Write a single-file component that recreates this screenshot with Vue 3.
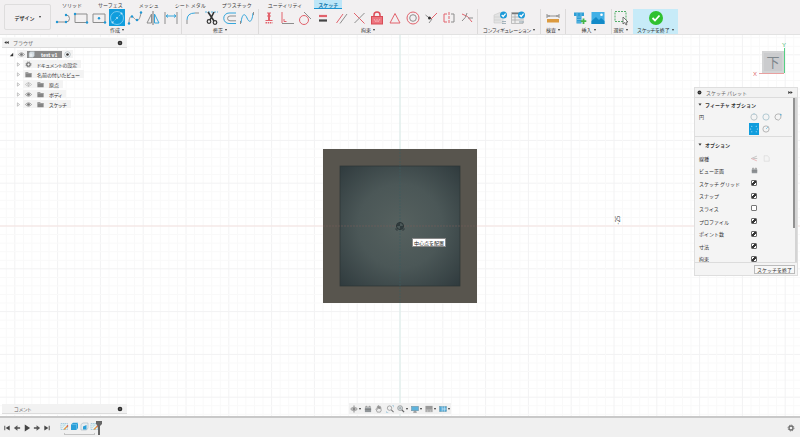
<script setup>
import { h, ref } from 'vue'

const G = 'fill="none" stroke="#8d8d8d" stroke-width="1"'
const B = 'fill="none" stroke="#35a6dc" stroke-width="1"'
const R = 'fill="none" stroke="#e2626c" stroke-width="1"'
const dot = (x, y, c = '#1f97d4') => `<circle cx="${x}" cy="${y}" r="1.2" fill="${c}"/>`

const glyphs = {
  line: `<path ${G} d="M3 13H12a3.500 3.500 0 0 0 0-7"/>${dot(3, 13)}${dot(12, 13)}${dot(12, 6)}`,
  rect: `<path ${G} d="M3 5H15V13.500H3Z"/>${dot(3, 5)}${dot(15, 13.5)}`,
  centerRect: `<path ${G} d="M3 5H15V13.500H3Z"/>${dot(9, 9.2)}${dot(15, 13.5)}`,
  circle: `<circle cx="9" cy="9" r="6.500" fill="none" stroke="#8fd3f4" stroke-width=".8"/><path d="M4.500 13.500L13.500 4.500" stroke="#7ccbf1" stroke-width=".7" stroke-dasharray="2 1"/><g fill="#b9e5fa"><circle cx="9" cy="9" r=".9"/><circle cx="13.500" cy="4.500" r="1"/><circle cx="4.500" cy="13.500" r="1"/></g>`,
  spline: `<path ${G} d="M3 14.500C3 7 5.500 6 8 9S13 14 15 4"/>${dot(3, 14.5)}${dot(6, 7.5)}${dot(11, 11)}${dot(15, 3.5)}`,
  mirror: `<path ${G} d="M7.500 5L3 14H7.500Z"/><path ${B} d="M10.500 5L15 14H10.500Z"/><path d="M9 2V16" stroke="#777"/>`,
  dimension: `<path ${G} d="M3 3V15M15 3V15"/><path ${B} d="M4 7H14M6 5.500L4 7L6 8.500M12 5.500L14 7L12 8.500"/>`,
  fillet: `<path ${B} d="M3 11Q3 4 11 4"/><path ${G} d="M3 11V15M11 4H15"/>`,
  trim: `<path d="M3 3H16" stroke="#35a6dc" stroke-width=".8" stroke-dasharray="2 1"/><path d="M6 3L12 12M12 3L8 11" stroke="#333" stroke-width="1.600"/><circle cx="7" cy="12.500" r="1.800" fill="none" stroke="#333" stroke-width="1.200"/><circle cx="13" cy="13.500" r="1.800" fill="none" stroke="#333" stroke-width="1.200"/>`,
  offset: `<path ${B} d="M16 4H9a5 5 0 0 0 0 10.500H16"/><path ${G} d="M16 7H10a2.300 2.300 0 0 0 0 4.800H16"/>`,
  curve: `<path ${B} d="M3 14C4 4 7 4 9 9S14 14 15 4"/><path ${G} d="M2.500 15V12M15.500 3V6"/>`,
  fix: `<path d="M9 4V11" stroke="#e2626c" stroke-width="2"/><path d="M7 4H11M7 7H11" ${R}/><path d="M5.500 11.500H12.500" ${R}/><path d="M5.500 13.800H12.500" stroke="#e2626c" stroke-width="1.500" stroke-dasharray="1.500 .7"/>`,
  corner: `<path d="M4 3V14" ${R}/><path d="M4 14.500H16" ${G}/><path d="M6 10V12.500H8.500" ${R}/>`,
  tangent: `<circle cx="8" cy="11" r="4.500" ${R}/><path d="M8 3L15 10" ${G}/>`,
  equal: `<path d="M5 7H13" stroke="#e2626c" stroke-width="2.200"/><path d="M5 11.500H13" stroke="#444" stroke-width="2.200"/>`,
  parallel: `<path d="M4.500 14L11 5" ${R}/><path d="M8 14.500L15 5" ${G}/>`,
  perp: `<path d="M4 4L9.500 9.500L14.500 14.500" ${R}/><path d="M14.500 4L4.500 14" ${G}/>`,
  lock: `<path d="M6 8V6a3 3 0 0 1 6 0V8" fill="none" stroke="#de4c58" stroke-width="1.500"/><rect x="3.500" y="7.500" width="11" height="7.500" fill="#ed747e" stroke="#d84c57"/><path d="M6 10L8 13M9 10V13M12 10L10 13" stroke="#fff" stroke-width=".4"/>`,
  triangle: `<path d="M9 4.500L14 14H4Z" ${R}/>`,
  concentric: `<circle cx="9" cy="9" r="6" ${R}/><circle cx="9" cy="9" r="3.300" ${G}/>`,
  midpoint: `<path d="M9 10L15 4" ${R}/><path d="M7 14L10 10" ${G}/><path d="M3.500 6L8 9.500" ${G}/><circle cx="7.500" cy="9" r="1.500" fill="#333"/>`,
  symmetry: `<path d="M7 5H4V13H7" ${R}/><path d="M11 5H14V13H11" ${G}/><path d="M9 3V15" stroke="#e2626c" stroke-dasharray="3 1"/>`,
  curvature: `<path d="M4 5Q10 6 14 13" ${R}/><path d="M9 4Q8 9 4 12M10 9H15" ${G}/>`,
  config: `<path d="M3 6L9 3.500L12 5V14H3Z" fill="#e3e3e3" stroke="#c9c9c9" stroke-width=".6"/><path d="M3 8H10M3 11H10" stroke="#c9c9c9" stroke-width=".6"/><circle cx="12.500" cy="6" r="3.500" fill="#1d9ad8"/><path d="M10.700 6L12.200 7.500L14.600 4.700" fill="none" stroke="#fff" stroke-width="1.200"/><path d="M11 12.500H15M11 14.500H15" stroke="#8fa4b0" stroke-width=".8"/>`,
  table: `<path d="M2.500 3.500H14V14.500H2.500Z" fill="#ededed" stroke="#aaa" stroke-width=".7"/><path d="M3 4.500H13" stroke="#777" stroke-width="1.500"/><path d="M3 8H13M3 11H13M6 5V14" stroke="#aaa" stroke-width=".8"/><circle cx="12.500" cy="6" r="3.500" fill="#1d9ad8"/><path d="M10.700 6L12.200 7.500L14.600 4.700" fill="none" stroke="#fff" stroke-width="1.200"/><path d="M10 13H15" stroke="#8fa4b0"/>`,
  measure: `<path d="M3 5V9M15 5V9M3 7H15M5 6V8M13 6V8" stroke="#777" fill="none" stroke-width=".8"/><rect x="3" y="10" width="12" height="3.500" fill="#dc9a3f"/>`,
  insert: `<path d="M3 3.500H13V7H10.500V14.500H5.500V7H3Z" fill="#2f9fd6"/><path d="M5.500 8H10.500M5.500 10.500H10.500M5.500 13H10.500M6 3.500V7M10 3.500V7" stroke="#86caea" stroke-width=".7"/><path d="M12.500 9.500V15M9.700 12.200H15.300" stroke="#42b549" stroke-width="1.800"/>`,
  image: `<rect x="2.500" y="3" width="13" height="12" fill="#42b0e6"/><path d="M2.500 12L7 8L10 11L12 9L15.500 12V15H2.500Z" fill="#138ac8"/><circle cx="12.500" cy="5.800" r="1.300" fill="#fff"/>`,
  select: `<rect x="3" y="2.500" width="11" height="10" fill="none" stroke="#53ad69" stroke-dasharray="2 1"/><path d="M11 8L11 15L12.700 13.500L14 16L15 15.500L14 13L16 13Z" fill="#fff" stroke="#555" stroke-width=".8"/>`,
  done: `<circle cx="9" cy="9" r="7" fill="#2fc12f"/><path d="M5.500 9L8 11.500L12.500 6.500" fill="none" stroke="#fff" stroke-width="1.800"/>`,
  eye: `<path d="M1 9Q9 0 17 9Q9 18 1 9Z" fill="#eee" stroke="#777" stroke-width="1.500"/><circle cx="9" cy="9" r="3.500" fill="#777"/>`,
  eyeOff: `<path d="M1 9Q9 0 17 9Q9 18 1 9Z" fill="none" stroke="#aaa" stroke-width="1.500"/><circle cx="9" cy="9" r="2.500" fill="none" stroke="#aaa" stroke-width="1.300"/><path d="M9 3V15" stroke="#aaa"/>`,
  folder: `<path d="M1 3H8L9.500 5H17V16H1Z" fill="#858585"/><path d="M2 6.500H16" stroke="#c3c3c3"/>`,
  gear: `<circle cx="9" cy="9" r="4.500" fill="none" stroke="#6f6f6f" stroke-width="3"/><circle cx="9" cy="9" r="6.700" fill="none" stroke="#6f6f6f" stroke-width="2" stroke-dasharray="2.800 2.460"/>`,
  component: `<path d="M3 5L6 2H16V13L13 16H3Z" fill="#e9edf0" stroke="#bccbd4"/><path d="M3 5H13V16M13 5L16 2" fill="none" stroke="#9fb3bf"/>`,
  radio: `<circle cx="9" cy="9" r="7" fill="#fff" stroke="#8799a3" stroke-width="1.500"/><circle cx="9" cy="9" r="3.500" fill="#333"/>`,
  bullet: `<circle cx="9" cy="9" r="7" fill="#2d2d2d"/><path d="M6 9H12" stroke="#bbb" stroke-width="1.500"/>`,
  rewind: `<path d="M9 4V14L1 9ZM17 4V14L9 9Z" fill="#333"/>`,
  forward: `<path d="M1 4V14L9 9ZM9 4V14L17 9Z" fill="#333"/>`,
  closed: `<path d="M5 3L13 9L5 15Z" fill="none" stroke="#888" stroke-width="1.700"/>`,
  open: `<path d="M15 3V15H3Z" fill="#333"/>`,
  down: `<path d="M2 4H16L9 15Z" fill="#333"/>`,
  first: `<path d="M4 4V14" stroke="#444" stroke-width="2"/><path d="M15 3.500V14.500L6 9Z" fill="#444"/>`,
  prev: `<path d="M10 3V15L2 9Z" fill="#555"/><path d="M9 9H16" stroke="#555" stroke-width="3.500"/>`,
  play: `<path d="M4 1V17L16 9Z" fill="#444"/>`,
  next: `<path d="M8 3V15L16 9Z" fill="#555"/><path d="M2 9H9" stroke="#555" stroke-width="3.500"/>`,
  last: `<path d="M14 4V14" stroke="#444" stroke-width="2"/><path d="M3 3.500V14.500L12 9Z" fill="#444"/>`,
  sketch: `<path d="M2 3H15V15H2Z" fill="#e9f3f8" stroke="#86bad4" stroke-width="1.300" stroke-dasharray="3 1"/><path d="M4 12L10 5M4 6H11" stroke="#9cc" /><path d="M8 15L15 8" stroke="#e49a44" stroke-width="2.500"/><path d="M14 9L16 7" stroke="#cf5252" stroke-width="2.500"/>`,
  extrude: `<path d="M2 5L6 1.500H16V12L13 16H2Z" fill="#2a9fd9"/><path d="M2 5H13V16M13 5L16 2" fill="none" stroke="#8cd0ef"/>`,
  shell: `<path d="M2 5L6 2H16V12L13 16H2Z" fill="#e8eef1" stroke="#98abb5"/><path d="M6 15V9L13 6V15Z" fill="#2a9fd9"/>`,
  orbit: `<path d="M9 1V17M2 9H16" stroke="#888" stroke-width="2"/><ellipse cx="9" cy="9" rx="7" ry="4" fill="none" stroke="#999" stroke-width="1.500"/><circle cx="9" cy="9" r="3" fill="#888"/>`,
  look: `<rect x="2" y="6" width="14" height="10" fill="#909598"/><path d="M4 6V3H7V6M11 6V3H14V6M2 10H16" fill="none" stroke="#777" stroke-width="1.500"/>`,
  hand: `<path d="M5 16L2 9Q3 7 5 10V4Q6 2 7 4V8V2Q8 0 9 2V8V3Q10 1 11 3V9V5Q13 3 13 6L14 12L12 16Z" fill="#eee" stroke="#777" stroke-width="1.300"/>`,
  zoomWin: `<circle cx="8" cy="7" r="5" fill="none" stroke="#777" stroke-width="1.300"/><path d="M12 11L17 16" stroke="#777" stroke-width="2.500"/><path d="M1 14V17H5M14 1H17V5" fill="none" stroke="#6aaed0"/>`,
  zoom: `<circle cx="7" cy="7" r="5.500" fill="#d9e2e6" stroke="#777" stroke-width="1.300"/><path d="M11 11L16 16" stroke="#666" stroke-width="3"/><path d="M4 7H10M7 4V10" stroke="#777"/>`,
  display: `<rect x="1" y="3" width="16" height="10" fill="#5eb3dc" stroke="#6d8795"/><path d="M9 13V16M5 16H13" stroke="#777" stroke-width="2"/>`,
  grid: `<path d="M1 2H17V16H1Z" fill="#999"/><path d="M1 11H17M6 11V16M12 11V16M1 14H17" stroke="#ddd"/>`,
  views: `<rect x="1" y="3" width="16" height="12" fill="#51a9d7" stroke="#6e929f"/><path d="M7 3V15M12 3V15M7 9H17" stroke="#e8f5fb" stroke-width="1.300"/>`,
  pCircle: `<circle cx="9" cy="9" r="7" fill="none" stroke="#a9b7be" stroke-width="1.700"/><circle cx="9" cy="2" r="1.300" fill="#8fc8e2"/>`,
  pCircle2: `<circle cx="9" cy="9" r="7" fill="none" stroke="#9dbdc8" stroke-width="1.700"/>`,
  pTangent: `<path d="M4 4L9 2L16 3L15 12L10 16L4 14L2 9Z" fill="none" stroke="#999" stroke-width="1.500"/><circle cx="15" cy="4" r="1.800" fill="#58b5df"/>`,
  pTangent3: `<circle cx="9" cy="9" r="7" fill="none" stroke="#999" stroke-width="1.500"/><path d="M9 9L14 4" stroke="#58b5df" stroke-width="1.500"/>`,
  pSel: `<g fill="#c8ecfd"><circle cx="3" cy="9" r="1"/><circle cx="15" cy="9" r="1"/><circle cx="5" cy="14" r="1"/><circle cx="13" cy="14" r="1"/><circle cx="5" cy="4" r="1"/><circle cx="13" cy="4" r="1"/></g>`,
  construction: `<path d="M1 9L15 3M6 9H16" stroke="#999" stroke-width="1.300"/><path d="M1 9L15 15" stroke="#de8d91" stroke-width="1.500"/>`,
  centerline: `<path d="M3 2H12L16 7V16H3Z" fill="none" stroke="#d2d2d2" stroke-width="1.300"/>`,
}

const Icon = (props) => h('svg', {
  viewBox: '0 0 18 18', 'aria-hidden': 'true', width: props.size, height: props.size, innerHTML: glyphs[props.name],
})
Icon.props = ['name', 'size']

const tabs = ['ソリッド', 'サーフェス', 'メッシュ', 'シート メタル', 'プラスチック', 'ユーティリティ', 'スケッチ']
const groups = [
  { label: '作成', cls: 'create', icons: ['line', 'rect', 'centerRect', 'circle', 'spline', 'mirror', 'dimension'] },
  { label: '修正', cls: 'modify', icons: ['fillet', 'trim', 'offset', 'curve'] },
  { label: '拘束', cls: 'constrain', icons: ['fix', 'corner', 'tangent', 'equal', 'parallel', 'perp', 'lock', 'triangle', 'concentric', 'midpoint', 'symmetry', 'curvature'] },
  { label: 'コンフィギュレーション', cls: 'config', icons: ['config', 'table'] },
  { label: '検査', cls: 'inspect', icons: ['measure'] },
  { label: '挿入', cls: 'insert', icons: ['insert', 'image'] },
  { label: '選択', cls: 'pick', icons: ['select'] },
  { label: 'スケッチを終了', cls: 'finish', icons: ['done'] },
]
const tree = [
  { label: 'ドキュメントの設定', icons: ['gear'] },
  { label: '名前の付いたビュー', icons: ['folder'] },
  { label: '原点', icons: ['eyeOff', 'folder'] },
  { label: 'ボディ', icons: ['eye', 'folder'] },
  { label: 'スケッチ', icons: ['eye', 'folder'] },
]
const options = ref([
  { id: 'grid', label: 'スケッチ グリッド', on: true },
  { id: 'snap', label: 'スナップ', on: true },
  { id: 'slice', label: 'スライス', on: false },
  { id: 'profile', label: 'プロファイル', on: true },
  { id: 'points', label: 'ポイント数', on: true },
  { id: 'dims', label: '寸法', on: true },
  { id: 'constraints', label: '拘束', on: true },
])
const nav = [['orbit', true], ['look', false], ['hand', false], ['zoomWin', false], ['zoom', true], ['display', true], ['grid', true], ['views', true]]
const playback = ['first', 'prev', 'play', 'next', 'last']
const features = ['sketch', 'extrude', 'shell', 'sketch']

const step = 8.56
const lines = Array.from({ length: 141 }, (_, i) => i - 70)
</script>

<template>
  <div class="app">
    <header class="toolbar">
      <button class="workspace">デザイン<i class="caret"></i></button>
      <div class="ribbon">
        <nav class="tabs">
          <button v-for="t in tabs" :key="t" :class="['tab', { active: t === 'スケッチ' }]">{{ t }}</button>
        </nav>
        <div class="groups">
          <section v-for="g in groups" :key="g.label" :class="['group', g.cls]">
            <div class="tools">
              <button v-for="n in g.icons" :key="n" :class="['tool', { chosen: n === 'circle' }]" :aria-label="n">
                <Icon :name="n" size="18" />
              </button>
            </div>
            <button class="menu">{{ g.label }}<i class="caret"></i></button>
          </section>
        </div>
      </div>
    </header>

    <main class="workarea">
      <svg class="canvas" viewBox="-400 -191 800 381" preserveAspectRatio="xMidYMid slice" aria-hidden="true">
        <defs>
          <radialGradient id="pocket" cx="50%" cy="50%" r="70%">
            <stop offset="0" stop-color="#56615f" />
            <stop offset=".5" stop-color="#4b5757" />
            <stop offset="1" stop-color="#303b3e" />
          </radialGradient>
        </defs>
        <g v-for="i in lines" :key="i" :stroke="i % 5 ? '#f9f9f9' : '#f2f2f3'">
          <path :d="`M${i * step} -400V400M-700 ${i * step}H700`" />
        </g>
        <path d="M-700 0H700" stroke="#f5e3e1" />
        <path d="M0 -400V400" stroke="#d8ebe8" />
        <rect x="-77" y="-77" width="154" height="154" fill="#58554e" />
        <rect x="-60" y="-60" width="120" height="120" fill="url(#pocket)" stroke="#2d3436" stroke-width=".7" />
        <path d="M-77 0H77" stroke="#75605a" stroke-width=".6" stroke-dasharray="2 1" />
        <path d="M0 -77V77" stroke="#3c5c60" stroke-width=".7" stroke-dasharray="2 1" />
        <circle r="3.500" fill="#4b5858" stroke="#273133" />
        <path d="M0 0V-3.200A3.200 3.200 0 0 0 -3.200 0ZM0 0V3.200A3.200 3.200 0 0 0 3.200 0Z" fill="#2f3a3c" />
        <path d="M-4 2V4H-2M4 2V4H2" fill="none" stroke="#273133" stroke-width=".7" />
        <text class="ruler" transform="translate(218 -6) rotate(-90)">-25</text>
      </svg>

      <aside class="left">
        <section>
          <div class="bar">
            <Icon name="rewind" size="5" /><span class="title">ブラウザ</span><Icon name="bullet" size="6" />
          </div>
          <ul class="tree">
            <li class="node root">
              <Icon name="open" size="5" />
              <div class="chip">
                <Icon name="eye" size="7" />
                <span class="doc"><Icon name="component" size="7" /><b>test v1</b></span>
                <Icon name="radio" size="7" />
              </div>
            </li>
            <li v-for="n in tree" :key="n.label" class="node">
              <Icon name="closed" size="5" />
              <div class="chip">
                <Icon v-for="c in n.icons" :key="c" :name="c" size="7" />
                <span>{{ n.label }}</span>
              </div>
            </li>
          </ul>
        </section>
        <div class="bar comments"><span class="title">コメント</span><Icon name="bullet" size="6" /></div>
      </aside>

      <nav class="navbar">
        <button v-for="[n, more] in nav" :key="n" :aria-label="n"><Icon :name="n" size="8" /><i v-if="more" class="caret"></i></button>
      </nav>

      <aside class="right">
        <svg class="cube" viewBox="0 0 40 40" aria-hidden="true">
          <rect x="9" y="11" width="22" height="22" fill="#d3d4d5" />
          <rect x="11" y="13" width="18" height="18" fill="#cbccce" />
          <text class="face" x="20" y="27">下</text>
          <path d="M31.500 8V33" stroke="#55cf83" />
          <path d="M6 33.500H31" stroke="#e9a09f" />
          <text class="axis" x="31" y="7" fill="#45b975">Y</text>
          <text class="axis" x="2" y="36" fill="#dd6c6c">X</text>
        </svg>

        <section class="palette">
          <div class="bar phead">
            <Icon name="bullet" size="5" /><span class="title">スケッチ パレット</span><Icon name="forward" size="5" />
          </div>
          <div class="pbody">
            <h2><Icon name="down" size="5" />フィーチャ オプション</h2>
            <div class="feature">
              <span>円</span>
              <div class="kinds">
                <button aria-label="中心と直径"><Icon name="pCircle" size="8" /></button>
                <button aria-label="2 点"><Icon name="pCircle2" size="8" /></button>
                <button aria-label="3 点"><Icon name="pTangent" size="8" /></button>
                <button aria-label="2 接線" class="chosen"><Icon name="pSel" size="10" /></button>
                <button aria-label="3 接線"><Icon name="pTangent3" size="8" /></button>
              </div>
            </div>
            <h2 class="second"><Icon name="down" size="5" />オプション</h2>
            <div class="options">
              <div class="opt">
                <span>線種</span>
                <span class="pair"><Icon name="construction" size="7" /><Icon name="centerline" size="7" /></span>
              </div>
              <div class="opt"><span>ビュー正面</span><Icon name="look" size="7" /></div>
              <div v-for="o in options" :key="o.id" class="opt">
                <label :for="o.id">{{ o.label }}</label><input :id="o.id" v-model="o.on" type="checkbox">
              </div>
            </div>
            <i class="thumb"></i>
          </div>
          <footer class="pfoot"><button>スケッチを終了</button></footer>
        </section>
      </aside>

      <div class="tip" role="tooltip">中心点を配置</div>
    </main>

    <footer class="timeline">
      <div class="playback">
        <button v-for="p in playback" :key="p" :aria-label="p"><Icon :name="p" size="8" /></button>
      </div>
      <div class="history">
        <div class="track">
          <div class="features">
            <button v-for="(f, i) in features" :key="i" :aria-label="f"><Icon :name="f" size="9" /></button>
          </div>
          <i class="bracket"></i>
        </div>
        <svg class="marker" viewBox="0 0 6 14" aria-hidden="true"><path d="M0 0H6V3L4 5V14H2V5L0 3Z" fill="#666" /></svg>
      </div>
      <button class="settings" aria-label="設定"><Icon name="gear" size="8" /></button>
    </footer>
  </div>
</template>

<style>
body { margin: 0; }
</style>

<style scoped>
.app {
  display: flex;
  flex-direction: column;
  min-height: 100vh;
  overflow: hidden;
  font: 5px/7px "Noto Sans CJK JP", sans-serif;
  color: #333;
  background: #fff;
}
.app * { box-sizing: border-box; }
button { display: flex; align-items: center; justify-content: center; margin: 0; padding: 0; border: 0; background: none; color: inherit; font: inherit; font-feature-settings: inherit; white-space: nowrap; }
svg { display: block; flex: none; }
.caret { flex: none; margin-left: 2px; border: 1px solid transparent; border-top: 2px solid #333; border-bottom: 0; }

.toolbar { display: flex; height: 35px; padding-left: 4px; background: #f2f0f1; border-bottom: 1px solid #e2e2e2; }
.workspace { width: 47px; height: 26px; margin: 4px 3px 0 0; border: 1px solid #dedddd; border-radius: 2px; font-weight: 700; }
.workspace .caret { margin-left: 4px; }
.ribbon { flex: 1; min-width: 0; }
.tabs { display: flex; height: 9px; }
.tab { height: 8px; padding: 0 8px; }
.tab.active { height: 9px; margin: 0 4px; padding: 0 4px; background: #bde6f8; border-bottom: 1px solid #1b94d2; color: #1478ad; font-weight: 700; }
.groups { display: flex; height: 25px; font-feature-settings: "palt"; }
.group { display: flex; flex-direction: column; align-items: center; padding: 0 2px; border-right: 1px solid #dcdada; }
.group.create { padding: 0 1px 0 0; }
.group.constrain { padding: 0 1px; }
.group.config { padding: 0; width: 63px; }
.group.inspect { width: 25px; }
.group.insert { width: 46px; padding: 0 4px; }
.group.pick { width: 17px; padding: 0; border: 0; }
.group.finish { width: 45px; margin-left: 4px; padding: 0; border: 0; background: #c7ebf8; }
.tools { display: flex; height: 17px; }
.tool { width: 18px; height: 17px; }
.tool.chosen { padding: 0 1px; background: #109ddd; background-clip: content-box; }
.menu { height: 7px; }

.workarea { position: relative; flex: 1; display: grid; grid-template-columns: 125px 1fr 125px; padding: 3px 2px 2px; overflow: hidden; }
.canvas { position: absolute; inset: 0; width: 100%; height: 100%; }
.ruler { font-size: 6px; fill: #333; text-anchor: middle; dominant-baseline: middle; }
.left, .right, .navbar { position: relative; }
.left { display: flex; flex-direction: column; justify-content: space-between; }
.bar { display: flex; align-items: center; height: 10px; padding: 0 4px 0 2px; background: #f2f2f2; border-bottom: 1px solid #dcdcdc; }
.title { flex: 1; padding-left: 4px; color: #666; }
.comments .title { padding-left: 10px; font-feature-settings: "palt"; }
.tree { margin: 1px 0 0; padding: 0; list-style: none; font-feature-settings: "palt"; }
.node { display: flex; align-items: center; gap: 2px; height: 10px; padding-left: 14px; }
.node.root { padding-left: 7px; gap: 3px; }
.chip { display: flex; align-items: center; gap: 5px; height: 8px; padding: 0 4px 0 2px; background: #f3f3f3; }
.root .chip { gap: 2px; padding: 0 2px 0 1px; }
.root .chip .doc { display: flex; align-items: center; gap: 6px; height: 7px; padding: 0 5px 0 1px; background: #8a8a8a; color: #fff; }

.navbar { display: flex; align-self: end; justify-self: center; align-items: center; gap: 3px; height: 11px; padding: 0 1px; background: #f1f1f1; }
.navbar .caret { margin-left: 1px; }

.right { display: flex; flex-direction: column; align-items: flex-end; }
.cube { width: 40px; height: 40px; margin: 2px 5px 0 0; }
.face { font-size: 13px; font-weight: 400; fill: #7e878c; text-anchor: middle; }
.axis { font: 6px/7px "Liberation Sans", sans-serif; text-anchor: middle; }
.palette { width: 104px; margin-top: 7px; background: #f4f4f4; border: 1px solid #dedede; }
.phead { height: 10px; }
.pbody { position: relative; height: 164px; padding-right: 3px; overflow: hidden; border-right: 2px solid #d4d4d4; }
h2 { display: flex; align-items: center; gap: 3px; height: 13px; margin: 0; padding-left: 3px; font-size: 5px; line-height: 7px; font-weight: 700; }
h2 svg { width: 4px; }
.feature { display: grid; grid-template-columns: 49px 1fr; height: 25px; padding-left: 4px; line-height: 12px; }
.kinds { display: grid; grid-template-columns: repeat(3, 12px); grid-auto-rows: 12px; }
.kinds button { margin: 0 1px; }
.kinds .chosen { background: #109ddd; }
.second { height: 16px; border-top: 1px solid #dcdcdc; }
.options { display: grid; grid-auto-rows: 1fr; height: 113px; padding-left: 4px; }
.opt { display: grid; grid-template-columns: 52px 1fr; align-items: center; }
.pair { display: flex; gap: 5px; }
input { appearance: none; width: 6px; height: 6px; margin: 0; border: 1px solid #777; border-radius: 1px; background: #fff; }
input:checked { background: linear-gradient(135deg, #fff 30%, #333 30% 75%, #fff 75%); border-color: #666; }
.thumb { position: absolute; top: 0; right: 0; width: 2px; height: 130px; background: #929292; }
.pfoot { display: flex; justify-content: flex-end; align-items: center; height: 13px; padding-right: 2px; border-top: 1px solid #dcdcdc; }
.pfoot button { height: 9px; padding: 0 2px; border: 1px solid #bbb; background: #f7f7f7; }

.tip { position: absolute; left: calc(50% + 12px); top: calc(50% + 12px); padding: 0 1px; border: 1px solid #888; background: #fff; color: #222; white-space: nowrap; }

.timeline { display: flex; align-items: center; height: 21px; padding: 0 5px 0 3px; border-top: 2px solid #c9c9c9; background: #f0f0f0; }
.playback { display: flex; gap: 2px; margin-right: 9px; }
.history { display: flex; align-items: center; }
.track { display: flex; flex-direction: column; gap: 2px; padding-top: 2px; }
.features { display: flex; gap: 1px; }
.bracket { height: 2px; margin: 0 4px; border: 1px solid #c4c4c4; border-top: 0; }
.marker { width: 6px; height: 14px; margin-left: -3px; }
.settings { margin-left: auto; }
</style>
